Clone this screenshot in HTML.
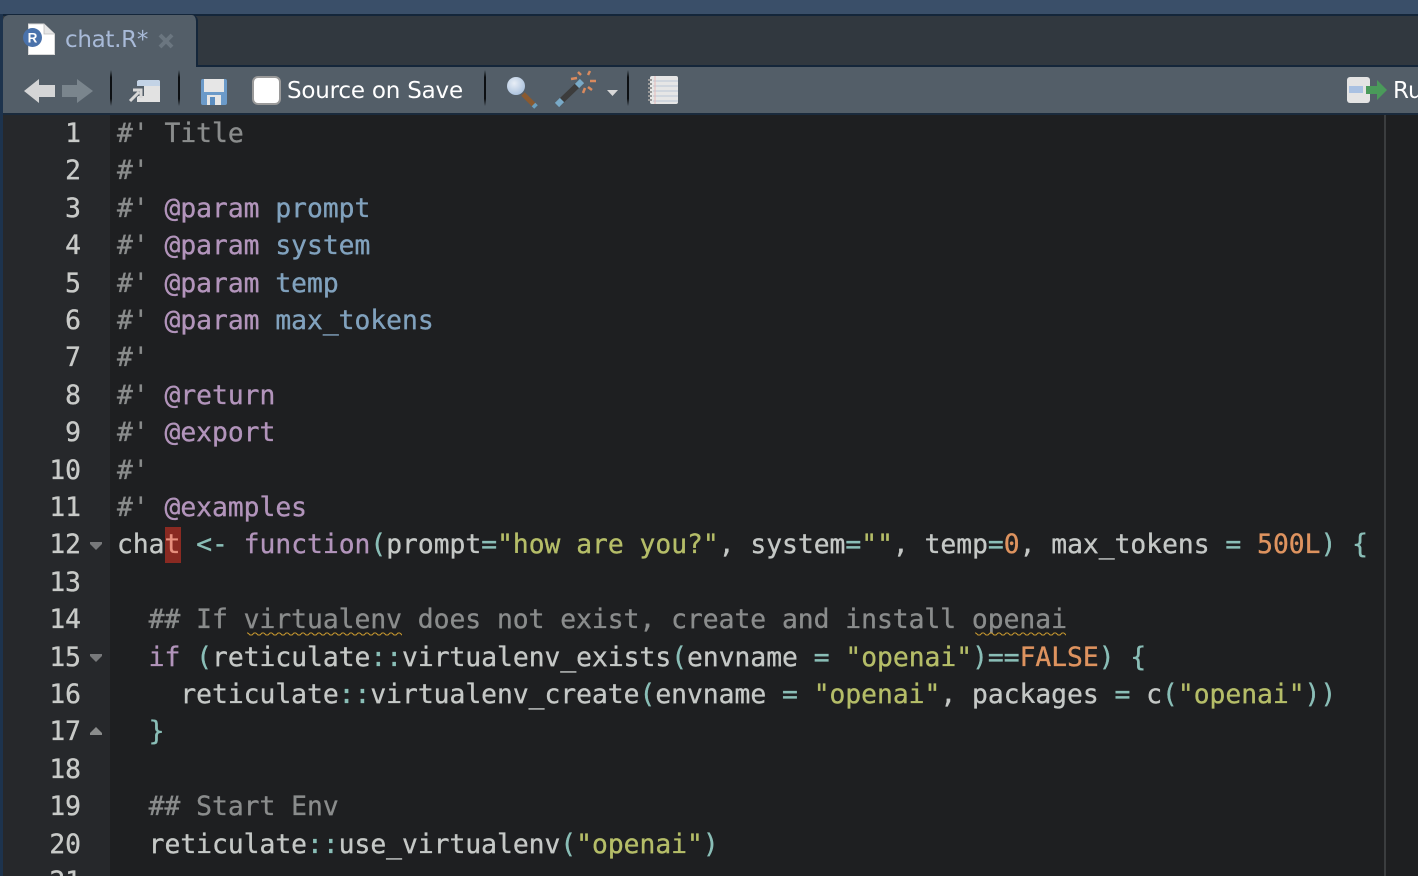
<!DOCTYPE html>
<html><head><meta charset="utf-8"><style>
html,body{margin:0;padding:0;background:#1e1f21}
#r{position:relative;width:1418px;height:876px;overflow:hidden;background:#1e1f21;font-family:"DejaVu Sans Mono","Liberation Mono",monospace}
.a{position:absolute}
.l{position:absolute;left:117px;font-size:26.3px;line-height:37.4px;height:37.4px;white-space:pre;color:#c5c8c6;-webkit-text-stroke:.35px}
.n{position:absolute;right:1337px;font-size:26.3px;line-height:37.4px;color:#c8cac8;white-space:pre;-webkit-text-stroke:.35px}
.c{color:#8a8c8c}.p{color:#b294bb}.b{color:#81a2be}.o{color:#8abeb7}.s{color:#b5bd68}.d{color:#de935f}
.ui{font-family:"DejaVu Sans","Liberation Sans",sans-serif}
</style></head><body><div id="r">
<div class="a" style="left:0;top:0;width:1418px;height:14px;background:#3a4f69"></div>
<div class="a" style="left:0;top:14px;width:1418px;height:2px;background:#14263a"></div>
<div class="a" style="left:2px;top:16px;width:1416px;height:50px;background:#31383f"></div>
<div class="a" style="left:2px;top:65px;width:1416px;height:2px;background:#14263a"></div>
<div class="a" style="left:3px;top:15px;width:193px;height:52px;background:#535e68;border-radius:6px 6px 0 0;border-right:2px solid #14263a;box-sizing:content-box"></div>
<div class="a" style="left:0;top:14px;width:3px;height:862px;background:#1d334d"></div>
<div class="a" style="left:3px;top:67px;width:1415px;height:46px;background:#535e68"></div>
<div class="a" style="left:3px;top:113px;width:1415px;height:2px;background:#1a2a3c"></div>

<svg class="a" style="left:20px;top:20px" width="40" height="40" viewBox="0 0 40 40">
<path d="M8.500 4H24L34.500 14V34.500H8.500Z" fill="#fff" stroke="#d8d8d8"/>
<path d="M24 4V14H34.500" fill="#e6e6e6" stroke="#bbb" stroke-width=".8"/>
<circle cx="12.500" cy="17.500" r="9.500" fill="#4a72ab"/>
<text x="12.500" y="22.500" font-size="13.500" font-weight="700" fill="#fff" text-anchor="middle" font-family="Liberation Sans">R</text></svg>
<div class="a ui" style="left:65px;top:25px;font-size:23px;line-height:30px;color:#a8bad8;letter-spacing:-.3px">chat.R*</div>
<svg class="a" style="left:157px;top:32px" width="18" height="18"><path d="M3 3L15 15M15 3L3 15" stroke="#6b7680" stroke-width="4"/></svg>

<svg class="a" style="left:22px;top:76px" width="74" height="30" viewBox="0 0 74 30">
<path d="M2 15L17 3V9H33V21H17V27Z" fill="#d4d5d6"/>
<path d="M71 15L55 3V9H40V21H55V27Z" fill="#7a858d"/></svg>
<div class="a" style="left:110px;top:70px;width:2px;height:36px;background:linear-gradient(#535e68,#0c0f12 20%,#0c0f12 80%,#535e68)"></div>
<div class="a" style="left:178px;top:70px;width:2px;height:36px;background:linear-gradient(#535e68,#0c0f12 20%,#0c0f12 80%,#535e68)"></div>
<svg class="a" style="left:127px;top:78px" width="36" height="26" viewBox="0 0 36 26">
<path d="M10 4Q10 2 13 2H31Q33 2 33 4V24H10Z" fill="#e2e2e2"/><path d="M10 4Q10 2 13 2H31Q33 2 33 4V8H10Z" fill="#c3d3e6"/>
<path d="M3 22L13 12M7 11H14V18" fill="none" stroke="#535e68" stroke-width="6"/>
<path d="M3 23L12 14M6 12H14V20" fill="none" stroke="#d8d8d8" stroke-width="3"/></svg>
<svg class="a" style="left:200px;top:78px" width="28" height="28" viewBox="0 0 28 28">
<rect x="1" y="1" width="26" height="26" rx="2" fill="#6b9ac9"/>
<rect x="4" y="1" width="20" height="13" fill="#e6e6e6"/>
<rect x="7" y="17" width="14" height="10" fill="#e6e6e6"/><rect x="10" y="19" width="5" height="8" fill="#5b8dc0"/></svg>
<div class="a" style="left:252px;top:76px;width:25px;height:25px;background:#fff;border:2px solid #9a9a9a;border-radius:6px"></div>
<div class="a ui" style="left:287px;top:76px;font-size:23px;line-height:30px;color:#fff;white-space:pre;letter-spacing:-.2px">Source on Save</div>
<div class="a" style="left:484px;top:70px;width:2px;height:36px;background:linear-gradient(#535e68,#0c0f12 20%,#0c0f12 80%,#535e68)"></div>
<svg class="a" style="left:504px;top:75px" width="34" height="34" viewBox="0 0 34 34">
<path d="M19 19L31 31" stroke="#8a5a30" stroke-width="5"/><path d="M29.500 29.500L32 32" stroke="#6aa0c0" stroke-width="5"/>
<defs><radialGradient id="g" cx=".4" cy=".35" r=".7"><stop offset="0" stop-color="#e8eef6"/><stop offset="1" stop-color="#a8c0dc"/></radialGradient></defs>
<circle cx="12" cy="11" r="9" fill="url(#g)"/></svg>
<svg class="a" style="left:554px;top:68px" width="44" height="40" viewBox="0 0 44 40">
<path d="M4 36L27 14" stroke="#3c3c3c" stroke-width="6"/><path d="M3 37L8 32M23 18L28 13" stroke="#79aac8" stroke-width="6"/>
<path d="M27 7L24 4M34 7L36 3M17 11L23 10M36 13L42 13M34 19L38 22M31 20L29 25" stroke="#d98a5e" stroke-width="2.500"/></svg>
<svg class="a" style="left:606px;top:89px" width="14" height="8"><path d="M1 1H12L6.500 7Z" fill="#d8d8d8"/></svg>
<div class="a" style="left:627px;top:70px;width:2px;height:36px;background:linear-gradient(#535e68,#0c0f12 20%,#0c0f12 80%,#535e68)"></div>
<svg class="a" style="left:647px;top:75px" width="32" height="30" viewBox="0 0 32 30">
<rect x="3" y="1" width="28" height="28" rx="2" fill="#e6e6e6"/>
<path d="M6 6H31M6 11H31M6 16H31M6 21H31M6 26H31" stroke="#b9c6d6" stroke-width="1"/>
<path d="M8 1V29" stroke="#e5b9b9" stroke-width="1"/>
<path d="M1 5H5M1 9H5M1 13H5M1 17H5M1 21H5M1 25H5" stroke="#999" stroke-width="2"/></svg>
<svg class="a" style="left:1346px;top:76px" width="42" height="28" viewBox="0 0 42 28">
<rect x="1" y="1" width="23" height="26" rx="3" fill="#e4e4e4"/>
<rect x="3" y="10" width="14" height="7" fill="#a9c1e2"/>
<path d="M20 10H31V4L41 14L31 24V18H20Z" fill="#4a9a5a"/></svg>
<div class="a ui" style="left:1393px;top:76px;font-size:23px;line-height:30px;color:#fff">Run</div>

<div class="a" style="left:3px;top:115px;width:107px;height:761px;background:#26282b"></div>
<div class="a" style="left:1384px;top:115px;width:2px;height:761px;background:#3b3d3f"></div>
<div class="a" style="left:165px;top:527px;width:16px;height:36px;background:#8a2a22"></div>

<div class="n" style="top:116px">1</div><div class="n" style="top:153px">2</div><div class="n" style="top:191px">3</div><div class="n" style="top:228px">4</div><div class="n" style="top:266px">5</div><div class="n" style="top:303px">6</div><div class="n" style="top:340px">7</div><div class="n" style="top:378px">8</div><div class="n" style="top:415px">9</div><div class="n" style="top:453px">10</div><div class="n" style="top:490px">11</div><div class="n" style="top:527px">12</div><div class="n" style="top:565px">13</div><div class="n" style="top:602px">14</div><div class="n" style="top:640px">15</div><div class="n" style="top:677px">16</div><div class="n" style="top:714px">17</div><div class="n" style="top:752px">18</div><div class="n" style="top:789px">19</div><div class="n" style="top:827px">20</div><div class="n" style="top:864px">21</div>

<svg class="a" style="left:89px;top:541px" width="14" height="10"><path d="M1 1H13V3L7 9L1 3Z" fill="#77797b"/></svg>
<svg class="a" style="left:89px;top:653px" width="14" height="10"><path d="M1 1H13V3L7 9L1 3Z" fill="#77797b"/></svg>
<svg class="a" style="left:89px;top:726px" width="14" height="10"><path d="M1 9H13V7L7 1L1 7Z" fill="#8a8c8c"/></svg>

<div class="l c" style="top:116px">#' Title</div>
<div class="l c" style="top:153px">#'</div>
<div class="l c" style="top:191px">#' <span class="p">@param</span> <span class="b">prompt</span></div>
<div class="l c" style="top:228px">#' <span class="p">@param</span> <span class="b">system</span></div>
<div class="l c" style="top:266px">#' <span class="p">@param</span> <span class="b">temp</span></div>
<div class="l c" style="top:303px">#' <span class="p">@param</span> <span class="b">max_tokens</span></div>
<div class="l c" style="top:340px">#'</div>
<div class="l c" style="top:378px">#' <span class="p">@return</span></div>
<div class="l c" style="top:415px">#' <span class="p">@export</span></div>
<div class="l c" style="top:453px">#'</div>
<div class="l c" style="top:490px">#' <span class="p">@examples</span></div>
<div class="l" style="top:527px">cha<span style="color:#e8907e">t</span> <span class="o">&lt;-</span> <span class="p">function</span><span class="o">(</span>prompt<span class="o">=</span><span class="s">"how are you?"</span>, system<span class="o">=</span><span class="s">""</span>, temp<span class="o">=</span><span class="d">0</span>, max_tokens <span class="o">=</span> <span class="d">500L</span><span class="o">)</span> <span class="o">{</span></div>
<div class="l c" style="top:602px">  ## If virtualenv does not exist, create and install openai</div>
<div class="l" style="top:640px">  <span class="p">if</span> <span class="o">(</span>reticulate<span class="o">::</span>virtualenv_exists<span class="o">(</span>envname <span class="o">=</span> <span class="s">"openai"</span><span class="o">)==</span><span class="d">FALSE</span><span class="o">)</span> <span class="o">{</span></div>
<div class="l" style="top:677px">    reticulate<span class="o">::</span>virtualenv_create<span class="o">(</span>envname <span class="o">=</span> <span class="s">"openai"</span>, packages <span class="o">=</span> c<span class="o">(</span><span class="s">"openai"</span><span class="o">))</span></div>
<div class="l o" style="top:714px">  }</div>
<div class="l c" style="top:789px">  ## Start Env</div>
<div class="l" style="top:827px">  reticulate<span class="o">::</span>use_virtualenv<span class="o">(</span><span class="s">"openai"</span><span class="o">)</span></div>

<svg class="a" style="left:0;top:631px" width="1418" height="8">
<defs><pattern id="w" width="8" height="4" patternUnits="userSpaceOnUse" y="1"><path d="M0 1L2 3L4 3L6 1L8 1" fill="none" stroke="#c9992e" stroke-width="1"/></pattern></defs>
<rect x="247" y="1" width="155" height="4" fill="url(#w)"/><rect x="975" y="1" width="91" height="4" fill="url(#w)"/></svg>
</div></body></html>
